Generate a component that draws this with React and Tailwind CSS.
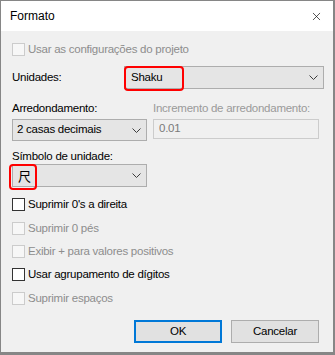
import { X } from 'lucide-react'

const Chevron = () => (
  <svg width="9" height="5" viewBox="0 0 9 5" className="shrink-0">
    <polyline points="0.5,0.5 4.5,4.5 8.5,0.5" fill="none" stroke="#3c3c3c" strokeWidth="1" />
  </svg>
)

const Check = ({ label, disabled, className = '' }) => (
  <div className={`flex items-center h-[13px] ${className}`}>
    <span
      className={`w-[13px] h-[13px] shrink-0 border ${
        disabled ? 'border-[#cccccc] bg-[#f7f7f7]' : 'border-[#333333] bg-white'
      }`}
    />
    <span className={`ml-[3px] leading-[15px] ${disabled ? 'text-[#8d8d8d]' : 'text-black'}`}>
      {label}
    </span>
  </div>
)

const Combo = ({ children, className = '', pad = 'pl-[4px]' }) => (
  <div
    className={`relative flex items-center justify-between border border-[#adadad] bg-[#e5e5e5] ${pad} pr-[5px] ${className}`}
  >
    {children}
    <Chevron />
  </div>
)

export default function App() {
  return (
    <div
      className="w-[335px] h-[355px] bg-[#f0f0f0] border-l border-t border-r-2 border-b-[3px] border-[#868686] flex flex-col text-[11.5px] tracking-[-0.25px] text-black"
      style={{ fontFamily: '"Liberation Sans", Arial, sans-serif' }}
    >
      <div className="h-[30px] bg-white flex items-center justify-between pl-[9px] pr-[10px] shrink-0">
        <span className="text-[12px] leading-[15px] tracking-normal">Formato</span>
        <X size={13} strokeWidth={1.3} color="#111" />
      </div>

      <div className="flex flex-col pl-[11px]">
        <Check label="Usar as configurações do projeto" disabled className="mt-[12px]" />

        <div className="flex items-center mt-[10px] h-[23px]">
          <span className="w-[112px] shrink-0">Unidades:</span>
          <Combo className="w-[200px] h-[23px]" pad="pl-[6px]">
            <span>Shaku</span>
            <span className="absolute left-[-1px] top-[-1px] w-[60px] h-[25px] border-2 border-[#ff0000] rounded-[4px]" />
          </Combo>
        </div>

        <div className="flex mt-[12px] leading-[15px]">
          <span className="w-[141px] shrink-0">Arredondamento:</span>
          <span className="text-[#9a9a9a]">Incremento de arredondamento:</span>
        </div>
        <div className="flex mt-[3px] items-start">
          <Combo className="w-[135px] h-[22px]">
            <span>2 casas decimais</span>
          </Combo>
          <div className="ml-[6px] w-[166px] h-[20px] border border-[#cccccc] bg-[#f0f0f0] flex items-center pl-[5px] text-[#7a7a7a]">
            0.01
          </div>
        </div>

        <span className="mt-[8px] leading-[15px]">Símbolo de unidade:</span>
        <Combo className="w-[135px] h-[23px]">
          <span
            className="text-[13px] leading-[15px] pl-[1px]"
            style={{ fontFamily: '"Noto Sans CJK JP", "Noto Sans CJK SC", sans-serif' }}
          >
            尺
          </span>
          <span className="absolute left-[-4px] top-[-1px] w-[28px] h-[26px] border-2 border-[#ff0000] rounded-[4px]" />
          <span className="flex-1" />
        </Combo>

        <Check label="Suprimir 0's a direita" className="mt-[11px]" />
        <Check label="Suprimir 0 pés" disabled className="mt-[11px]" />
        <Check label="Exibir + para valores positivos" disabled className="mt-[10px]" />
        <Check label="Usar agrupamento de dígitos" className="mt-[10px]" />
        <Check label="Suprimir espaços" disabled className="mt-[11px]" />

        <div className="flex gap-[9px] ml-[122px] mt-[15px]">
          <button className="w-[88px] h-[23px] border-2 border-[#0078d7] bg-[#e1e1e1]">OK</button>
          <button className="w-[88px] h-[23px] border border-[#adadad] bg-[#e1e1e1]">Cancelar</button>
        </div>
      </div>
    </div>
  )
}
